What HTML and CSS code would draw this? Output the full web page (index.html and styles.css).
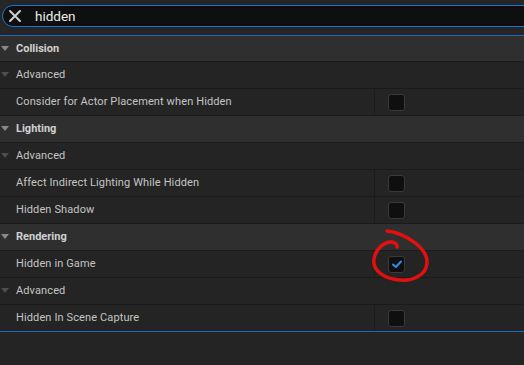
FILE: index.html
```html
<!DOCTYPE html>
<html>
<head>
<meta charset="utf-8">
<link rel="stylesheet" href="styles.css">
</head>
<body>
<div class="top">
  <div class="search">
    <svg class="clear" width="14" height="14" viewBox="0 0 14 14"><path d="M2 2 L12 12 M12 2 L2 12" stroke="#cfcfcf" stroke-width="2" stroke-linecap="round"/></svg>
    <span class="query">hidden</span>
  </div>
</div>
<div class="list">
  <div class="row cat first"><span class="tri"></span><span class="label">Collision</span></div>
  <div class="row adv"><span class="tri"></span><span class="label">Advanced</span></div>
  <div class="row prop"><span class="label">Consider for Actor Placement when Hidden</span><span class="value"><span class="box"></span></span></div>
  <div class="row cat"><span class="tri"></span><span class="label">Lighting</span></div>
  <div class="row adv"><span class="tri"></span><span class="label">Advanced</span></div>
  <div class="row prop"><span class="label">Affect Indirect Lighting While Hidden</span><span class="value"><span class="box"></span></span></div>
  <div class="row prop"><span class="label">Hidden Shadow</span><span class="value"><span class="box"></span></span></div>
  <div class="row cat"><span class="tri"></span><span class="label">Rendering</span></div>
  <div class="row prop"><span class="label">Hidden in Game</span><span class="value"><span class="box checked"><svg width="12" height="10" viewBox="0 0 12 10"><path d="M2 5.5 L4.8 8 L10 2.5" fill="none" stroke="#2b8cf2" stroke-width="2" stroke-linecap="round" stroke-linejoin="round"/></svg></span></span></div>
  <div class="row adv"><span class="tri"></span><span class="label">Advanced</span></div>
  <div class="row prop last"><span class="label">Hidden In Scene Capture</span><span class="value"><span class="box"></span></span></div>
</div>
<svg class="scribble" width="524" height="365" viewBox="0 0 524 365"><path d="M387 231 C 405 233, 428 248, 427 263 C 426 276, 412 281, 400 280 C 385 279, 372 271, 374 259 C 376 248, 385 241, 392 242 C 396 243, 398 245, 397 247" fill="none" stroke="#e3100f" stroke-width="3.5" stroke-linecap="round"/></svg>
</body>
</html>
```
FILE: styles.css
```css
html, body {
  margin: 0;
  padding: 0;
  width: 524px;
  height: 365px;
  overflow: hidden;
  background: #242424;
  font-family: Roboto, "Noto Sans", sans-serif;
}
.top {
  height: 36px;
  box-sizing: border-box;
  padding: 5px 0 0 2px;
  background: #262626;
  border-bottom: 1px solid #1c69c4;
}
.search {
  height: 22px;
  width: 540px;
  box-sizing: border-box;
  background: #0f0f0f;
  border: 1px solid #1f72d4;
  border-radius: 11px 0 0 11px;
  display: flex;
  align-items: center;
}
.clear {
  margin-left: 5px;
  flex: none;
}
.query {
  margin-left: 13px;
  color: #ececec;
  font-size: 13.5px;
}
.list {
  position: relative;
}
.row {
  height: 27px;
  box-sizing: border-box;
  border-bottom: 1px solid #1b1b1b;
  padding-bottom: 1px;
  display: flex;
  align-items: center;
  font-size: 11px;
  letter-spacing: 0.12px;
  color: #c4c4c4;
  background: #242424;
}
.row.first {
  height: 26px;
}
.row.last {
  border-bottom-color: #1c69c4;
}
.row.cat {
  background: #2f2f2f;
  font-weight: bold;
  letter-spacing: 0;
  color: #cfcfcf;
}
.tri {
  width: 0;
  height: 0;
  border-left: 4px solid transparent;
  border-right: 4px solid transparent;
  border-top: 5px solid #8a8a8a;
  margin-left: 1px;
  margin-right: 7px;
}
.row.adv .tri {
  border-top-color: #4e4e4e;
}
.row.prop {
  padding-bottom: 0;
}
.row.prop .label {
  padding-left: 16px;
  padding-bottom: 1px;
  width: 375px;
  box-sizing: border-box;
  border-right: 1px solid #1b1b1b;
  align-self: stretch;
  display: flex;
  align-items: center;
}
.value {
  display: flex;
  align-items: center;
  padding-left: 13px;
}
.box {
  width: 17px;
  height: 17px;
  box-sizing: border-box;
  background: #0f0f0f;
  border: 1px solid #3a3a3a;
  border-radius: 3px;
  display: flex;
  align-items: center;
  justify-content: center;
}
.scribble {
  position: absolute;
  left: 0;
  top: 0;
  pointer-events: none;
}
```
